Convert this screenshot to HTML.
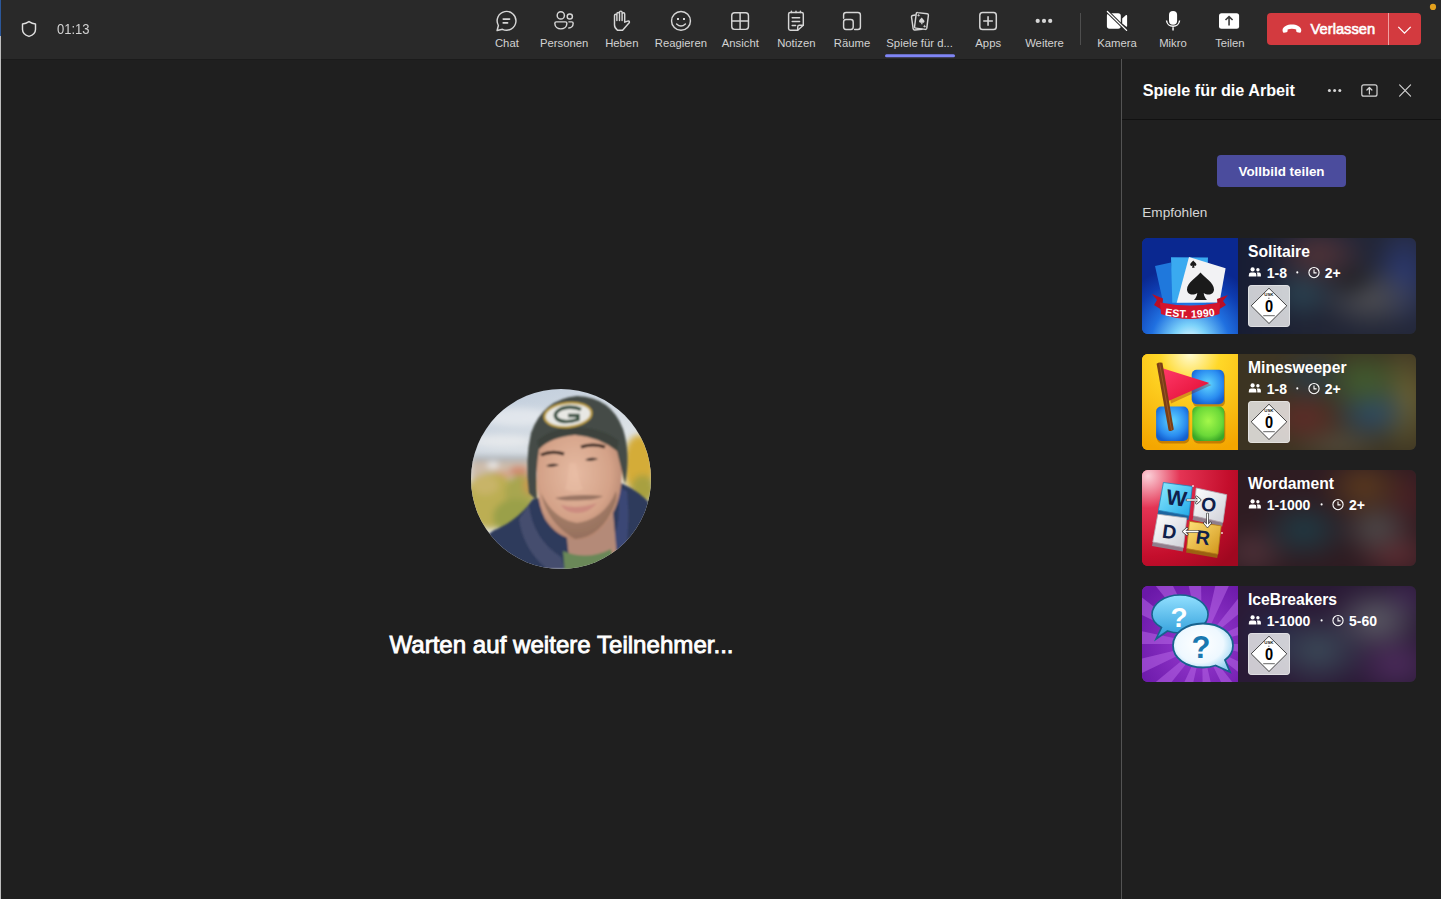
<!DOCTYPE html>
<html><head><meta charset="utf-8">
<style>
*{margin:0;padding:0;box-sizing:border-box}
html,body{width:1441px;height:899px;overflow:hidden;background:#1f1f1f;font-family:"Liberation Sans",sans-serif}
.abs{position:absolute}
.t{position:absolute;white-space:nowrap;line-height:1}
#top{position:absolute;left:0;top:0;width:1441px;height:59px;background:#292929}
.lbl{position:absolute;top:37.6px;font-size:11.3px;line-height:1;color:#d2d2d2;white-space:nowrap;transform:translateX(-50%)}
#panel{position:absolute;left:1121px;top:59px;width:320px;height:840px;background:#1f1f1f;border-left:1px solid #535353}
.card{position:absolute;left:1142px;width:274px;height:96px;border-radius:6px;overflow:hidden;background:#2a2a2a}
.card .ic{position:absolute;left:0;top:0;width:96px;height:96px}
.card .bg{position:absolute;left:96px;top:0;width:178px;height:96px}
.card .ti{position:absolute;left:106px;font-size:15.7px;font-weight:700;color:#fff;line-height:1;white-space:nowrap}
.card .mt{position:absolute;font-size:14px;font-weight:700;color:#fff;line-height:1;white-space:nowrap}
.card .bg{overflow:hidden}.bgi{position:absolute;left:-20px;top:-20px;width:218px;height:136px;filter:blur(9px)}
.usk{position:absolute;left:106px;top:47px;width:42px;height:42px;border-radius:4px;background:rgba(255,255,255,0.77);box-shadow:inset 0 0 0 0.8px rgba(255,255,255,0.5)}

#bg1{background:radial-gradient(50px 32px at 101px 37px,#553438,transparent),radial-gradient(28px 22px at 133px 60px,#1e1e22,transparent),radial-gradient(55px 34px at 152px 80px,#505054,transparent),radial-gradient(35px 30px at 84px 75px,#2c4654,transparent),radial-gradient(34px 55px at 186px 56px,#2c3a74,transparent),linear-gradient(90deg,#151b34,#202434 40%,#24283a)}
#bg2{background:radial-gradient(45px 34px at 146px 46px,#426030,transparent),radial-gradient(42px 34px at 154px 77px,#2a4c6c,transparent),radial-gradient(45px 30px at 86px 84px,#622a28,transparent),radial-gradient(36px 60px at 188px 65px,#6e6434,transparent),radial-gradient(40px 28px at 94px 44px,#2a3c4a,transparent),radial-gradient(50px 22px at 120px 110px,#524a3c,transparent),#3c3422}
#bg3{background:radial-gradient(46px 34px at 146px 37px,#5e3c1e,transparent),radial-gradient(48px 34px at 86px 80px,#1e3c46,transparent),radial-gradient(40px 32px at 158px 78px,#504c4c,transparent),radial-gradient(44px 28px at 178px 104px,#602c32,transparent),radial-gradient(40px 30px at 35px 102px,#50323a,transparent),radial-gradient(30px 40px at 190px 48px,#4a2024,transparent),#2e1c22}
#bg4{background:radial-gradient(55px 40px at 100px 84px,#3c4c5a,transparent),radial-gradient(50px 36px at 158px 54px,#5e5e68,transparent),radial-gradient(48px 34px at 178px 98px,#4e2c5e,transparent),radial-gradient(36px 40px at 54px 70px,#262a4a,transparent),radial-gradient(30px 25px at 190px 30px,#3c2450,transparent),#2a1a36}
#ic1{background:radial-gradient(60px 40px at 48px 100px,#c8f4ff,#3aa0f0 45%,transparent 100%),radial-gradient(70px 70px at 48px 50px,#1a5ad8,#0c2c96)}
#ic2{background:radial-gradient(60px 40px at 48px 5px,#fff6a0,#ffd21e 60%,transparent),#f7b400}
#ic3{background:radial-gradient(50px 50px at 10px 10px,#f5a0b0,transparent),linear-gradient(135deg,#e02a48,#c8102e 60%,#a80020)}
#ic4{background:radial-gradient(70px 70px at 48px 48px,#9a3ad0,#7a1ab8)}
</style></head>
<body>
<div id="top"></div>
<div class="abs" style="left:0;top:59px;width:1441px;height:1px;background:#1b1b1b"></div>
<div class="abs" style="left:0;top:0;width:1px;height:36px;background:#2b579a"></div>
<div class="abs" style="left:0;top:36px;width:1px;height:863px;background:#bdbdbd"></div>


<!-- leave button -->
<div class="abs" style="left:1267px;top:13px;width:154px;height:32px;border-radius:4px;background:#d33a3f"></div>
<div class="abs" style="left:1388px;top:13px;width:1px;height:32px;background:#f0a0a2"></div>
<span class="t" style="left:1310.6px;top:21.8px;font-size:14.7px;color:#fff;-webkit-text-stroke:0.6px #fff">Verlassen</span>

<!-- toolbar icons -->
<svg class="abs" style="left:0;top:0" width="1441" height="59" viewBox="0 0 1441 59">
<g fill="none" stroke="#d6d6d6" stroke-width="1.45" stroke-linecap="round" stroke-linejoin="round">
<!-- shield -->
<path d="M29,21.6 C26.8,23.2 24.6,23.9 22.5,23.9 V29.4 C22.5,32.6 25,35 29,36.4 C33,35 35.5,32.6 35.5,29.4 V23.9 C33.4,23.9 31.2,23.2 29,21.6 Z" stroke="#e0e0e0"/>
<!-- chat -->
<path d="M498.4,25.5 A9.4,9.4 0 1 1 502.5,29.3 L497.1,30.5 Z"/>
<path d="M503.2,19.1 H509.6 M503.2,22.9 H507.6" stroke-width="1.6"/>
<!-- personen -->
<circle cx="560.8" cy="15.4" r="3.6"/>
<circle cx="569.8" cy="16.5" r="2.6"/>
<path d="M554.85,23.3 Q554.85,21.85 556.3,21.85 H565.4 Q566.85,21.85 566.85,23.3 V23.6 C566.85,27 564,28.85 560.85,28.85 C557.7,28.85 554.85,27 554.85,23.6 Z"/>
<path d="M568.9,21.85 H571.8 Q573.15,21.85 573.15,23.2 C573.15,26.3 570.9,27.9 568.8,28"/>
<!-- heben -->
<path transform="translate(612,10)" d="M2.5,15 V5.5 A1.2,1.2 0 0 1 4.9,5.5 V10.5 V3.7 A1.3,1.3 0 0 1 7.5,3.7 V10.5 V2.4 A1.3,1.3 0 0 1 10.1,2.4 V10.5 V4 A1.3,1.3 0 0 1 12.7,4 V12.2 L15.5,11.1 Q17.6,10.6 17.4,12.5 L10.6,20.3 H5.6 Q2.5,18 2.5,15 Z"/>
<!-- smiley -->
<circle cx="681" cy="20.9" r="9.45"/>
<path d="M676.6,23.9 Q681,28.2 685.4,23.9"/>
<rect x="677" y="18" width="2" height="2" fill="#d6d6d6" stroke="none"/>
<rect x="683" y="18" width="2" height="2" fill="#d6d6d6" stroke="none"/>
<!-- ansicht -->
<rect x="731.75" y="12.65" width="16.7" height="16.7" rx="2.8"/>
<path d="M740.1,12.65 V29.35 M731.75,21 H748.45"/>
<!-- notizen -->
<path d="M790.3,12.4 H801.6 Q803.3,12.4 803.3,14.1 V25.3 L797.7,30.3 H790.3 Q788.6,30.3 788.6,28.6 V14.1 Q788.6,12.4 790.3,12.4 Z"/>
<path d="M803.3,25.3 H799.4 Q797.7,25.3 797.7,27 V30.3"/>
<path d="M791.4,11.2 V12.4 M796,11.2 V12.4 M800.4,11.2 V12.4"/>
<path d="M792.2,17.8 H799.6 M792.2,21.6 H799.6 M792.2,25.4 H795.6" stroke-width="1.5"/>
<!-- raeume -->
<path d="M843.6,18.2 V15 Q843.6,12.5 846.1,12.5 H857.9 Q860.4,12.5 860.4,15 V26.9 Q860.4,29.4 857.9,29.4 H854.6"/>
<rect x="843.6" y="19.5" width="9.6" height="9.9" rx="2.4"/>
<!-- spiele -->
<path d="M915.2,15 L912.6,15.5 Q911.4,15.8 911.5,17 L913.2,28.8 Q913.5,30.1 914.8,30 L922,29.3"/>
<path d="M917.6,12.6 L927.2,13.8 Q928.6,14 928.4,15.4 L926.8,28.2 Q926.6,29.5 925.3,29.4 L915.8,28.1 Q914.4,27.9 914.6,26.5 L916.2,13.8 Q916.4,12.4 917.6,12.6 Z"/>
<path d="M921.8,17.4 C920.4,19 919,19.9 919,21.3 C919,22.5 920.3,23.1 921.4,22.4 L921.1,24.2 H922.6 L922.3,22.5 C923.4,23.2 924.6,22.6 924.5,21.3 C924.4,20 923.1,19.2 921.8,17.4 Z" fill="#d6d6d6" stroke="none"/>
<path d="M918.7,14.6 L919.5,15.4 L918.7,16.2 L917.9,15.4 Z M924.7,25.6 L925.5,26.4 L924.7,27.2 L923.9,26.4 Z" fill="#d6d6d6" stroke-width="0.8"/>
<!-- apps -->
<rect x="979.8" y="12.6" width="16.5" height="16.9" rx="2.8" stroke-width="1.5"/>
<path d="M988.05,16.8 V25.3 M983.8,21.05 H992.3" stroke-width="1.6"/>
</g>
<!-- weitere -->
<g fill="#d6d6d6"><circle cx="1037.7" cy="20.9" r="2.1"/><circle cx="1044" cy="20.9" r="2.1"/><circle cx="1050.2" cy="20.9" r="2.1"/></g>
<rect x="1080" y="13" width="1" height="32" fill="#4e4e4e"/>
<!-- kamera -->
<g fill="#fff">
<path d="M1109.6,13.2 H1118.2 Q1120.8,13.2 1120.8,15.8 V26.1 Q1120.8,28.7 1118.2,28.7 H1109.5 Q1106.9,28.7 1106.9,26.1 V15.8 Q1106.9,13.2 1109.6,13.2 Z"/>
<path d="M1122.2,18.4 L1126,15.1 Q1127.1,14.6 1127.1,15.8 V26 Q1127.1,27.2 1126,26.6 L1122.2,23.6 Z"/>
</g>
<path d="M1107.4,11.5 L1126.6,30.4" stroke="#292929" stroke-width="3.2"/>
<path d="M1107.4,11.5 L1126.6,30.4" stroke="#fff" stroke-width="1.3" stroke-linecap="round"/>
<!-- mikro -->
<rect x="1169" y="10.9" width="8.1" height="13.9" rx="4.05" fill="#fff"/>
<path d="M1166.5,20.5 A6.6,6.6 0 0 0 1179.6,20.5 M1173.05,27.2 V30.6" fill="none" stroke="#fff" stroke-width="1.4"/>
<!-- teilen -->
<rect x="1219" y="13.2" width="20.1" height="15.5" rx="2.5" fill="#fff"/>
<path d="M1229.05,25.6 V16.8 M1225.5,20 L1229.05,16.6 L1232.6,20" fill="none" stroke="#3a3a3a" stroke-width="1.6"/>
<!-- leave phone -->
<path d="M1282.5,30.2 C1282.8,26.5 1287.5,24.6 1291.9,24.6 C1296.3,24.6 1301,26.5 1301.3,30.2 L1301,31.8 Q1300.8,32.8 1299.8,32.7 L1297.2,32.2 Q1296.2,32 1296.2,31 V29.6 Q1294.2,28.7 1291.9,28.7 Q1289.6,28.7 1287.6,29.6 V31 Q1287.6,32 1286.6,32.2 L1284,32.7 Q1283,32.8 1282.8,31.8 Z" fill="#fff"/>
<path d="M1398.3,26.9 L1404.5,33.1 L1410.7,26.9" fill="none" stroke="#fff" stroke-width="1.3"/>
<circle cx="1433" cy="6.9" r="3.1" fill="#e3a11d"/>
<!-- active underline -->
<rect x="885" y="54.3" width="70" height="3" rx="1.5" fill="#7f85f5"/>
</svg>

<!-- timer -->
<span class="t" style="left:57.2px;top:22px;font-size:14px;color:#d2d2d2;transform:scaleX(0.93);transform-origin:0 0">01:13</span>

<!-- toolbar labels -->
<span class="lbl" style="left:506.9px">Chat</span>
<span class="lbl" style="left:564.2px">Personen</span>
<span class="lbl" style="left:621.8px">Heben</span>
<span class="lbl" style="left:680.9px">Reagieren</span>
<span class="lbl" style="left:740.3px">Ansicht</span>
<span class="lbl" style="left:796.3px">Notizen</span>
<span class="lbl" style="left:852px">Räume</span>
<span class="lbl" style="left:919.6px">Spiele für d...</span>
<span class="lbl" style="left:988.2px">Apps</span>
<span class="lbl" style="left:1044.5px">Weitere</span>
<span class="lbl" style="left:1117px">Kamera</span>
<span class="lbl" style="left:1173px">Mikro</span>
<span class="lbl" style="left:1229.9px">Teilen</span>

<!-- panel -->
<div id="panel"></div>
<div class="abs" style="left:1122px;top:119px;width:319px;height:1px;background:#111"></div>
<span class="t" style="left:1142.7px;top:82px;font-size:16.2px;font-weight:700;color:#fff">Spiele für die Arbeit</span>
<div class="abs" style="left:1217px;top:155px;width:129px;height:32px;border-radius:4px;background:#4b4c9d"></div>
<span class="t" style="left:1281.5px;top:165.3px;font-size:13.4px;font-weight:700;color:#fff;transform:translateX(-50%)">Vollbild teilen</span>
<span class="t" style="left:1142.3px;top:206px;font-size:13.6px;color:#d6d6d6">Empfohlen</span>


<svg class="abs" style="left:1300px;top:70px" width="141" height="40" viewBox="1300 70 141 40">
<g fill="#d6d6d6"><circle cx="1329.4" cy="90.4" r="1.5"/><circle cx="1334.6" cy="90.4" r="1.5"/><circle cx="1339.8" cy="90.4" r="1.5"/></g>
<g fill="none" stroke="#d6d6d6" stroke-width="1.2" stroke-linecap="round" stroke-linejoin="round">
<rect x="1361.8" y="84.8" width="15.2" height="11.4" rx="2"/>
<path d="M1369.4,94 V87.6 M1366.9,90 L1369.4,87.5 L1371.9,90"/>
<path d="M1399.6,84.8 L1410.6,96.2 M1410.6,84.8 L1399.6,96.2" stroke-width="1.1"/>
</g>
</svg>

<!-- cards -->
<div class="card" style="top:238px">
  <div class="bg"><div class="bgi" id="bg1"></div></div>
  <div class="ic" id="ic1"><svg width="96" height="96" viewBox="0 0 96 96">
<defs>
<radialGradient id="s1g" cx="48" cy="104" r="78" gradientUnits="userSpaceOnUse"><stop offset="0" stop-color="#f0fcff"/><stop offset="0.22" stop-color="#7cd2fa"/><stop offset="0.5" stop-color="#2070e0"/><stop offset="0.8" stop-color="#0e3cb0"/><stop offset="1" stop-color="#0a2890"/></radialGradient>
<path id="s1p" d="M16,76.3 Q48,83 80,76.3"/>
</defs>
<rect width="96" height="96" fill="url(#s1g)"/>
<path d="M13,28 L29,24.5 L35,64 L21.5,66 Z" fill="#1f78dc"/>
<path d="M29,19.2 L66,19.6 L64,64.5 L30.3,64.7 Z" fill="#3aaaf0"/>
<path d="M47,19.1 L83.6,30.3 L77.5,64.5 L34.7,64.7 Z" fill="#f2f2f4"/>
<path d="M58.5,34.5 C54,40 45,44.5 45,51.5 C45,56 50.5,58.2 55.3,55 C55,58 53.5,60.5 52,62 H65 C63.5,60.5 62,58 61.7,55 C66.5,58.2 72,56 72,51.5 C72,44.5 63,40 58.5,34.5 Z" fill="#1a1a1a"/>
<path d="M51.2,22.5 C50.2,24 48.2,25 48.2,26.6 C48.2,27.8 49.5,28.3 50.6,27.6 L50,29.7 H52.6 L52,27.6 C53.1,28.3 54.4,27.8 54.4,26.6 C54.4,25 52.2,24 51.2,22.5 Z" fill="#1a1a1a"/>
<path d="M10,56 L21,60.5 L20,72 L12,67 L15,62 Z" fill="#b80e26"/>
<path d="M86,57 L75,61 L76,72 L84,67 L81,63 Z" fill="#b80e26"/>
<path d="M18,64.5 Q48,70.5 78,64.5 L77.5,76 Q48,86 19,76 Z" fill="#d4142c"/>
<text font-family="Liberation Sans" font-size="10.6" font-weight="700" fill="#fff" letter-spacing="0.2"><textPath href="#s1p" startOffset="50%" text-anchor="middle">EST. 1990</textPath></text>
</svg></div>
  <span class="ti" style="top:6.2px">Solitaire</span>
  <svg class="abs" style="left:0;top:0" width="274" height="96" viewBox="0 0 274 96">
<g fill="#fff"><circle cx="110.6" cy="31.4" r="2.1"/><circle cx="115.9" cy="31.8" r="1.7"/>
<path d="M106.8,38.6 V37 Q106.8,34.6 109,34.6 H112.2 Q114.4,34.6 114.4,37 V38.6 Z"/>
<path d="M115.3,38.6 V36.6 Q115.3,35.4 114.7,34.6 H117.1 Q118.9,34.6 118.9,36.6 V38.6 Z"/>
<circle cx="155.3" cy="34.4" r="1.05"/></g>
<circle cx="172" cy="34.6" r="5.1" fill="none" stroke="#fff" stroke-width="1.1"/>
<path d="M172,31.6 V34.9 H174.6" fill="none" stroke="#fff" stroke-width="1.1"/>
</svg>
  <span class="mt" style="left:124.7px;top:27.6px">1-8</span>
  <span class="mt" style="left:182.8px;top:27.6px">2+</span>
  <div class="usk"><svg width="42" height="42" viewBox="0 0 42 42"><path d="M21,3.2 L38.8,20.8 L21,38.5 L3.2,20.8 Z" fill="#fff" stroke="#1a1a1a" stroke-width="0.8"/><text x="20.9" y="11.2" font-family="Liberation Sans" font-size="4.4" font-weight="700" text-anchor="middle" fill="#222">USK</text><rect x="20" y="12.8" width="1.6" height="0.8" fill="#555"/><text x="21.1" y="27.2" font-family="Liberation Sans" font-size="17" font-weight="700" text-anchor="middle" fill="#000" transform="translate(21.1 0) scale(0.86 1) translate(-21.1 0)">0</text><rect x="15.2" y="30.2" width="11.6" height="1" fill="#666"/></svg></div>
</div>
<div class="card" style="top:354px">
  <div class="bg"><div class="bgi" id="bg2"></div></div>
  <div class="ic" id="ic2"><svg width="96" height="96" viewBox="0 0 96 96">
<defs>
<radialGradient id="m1g" cx="48" cy="0" r="100" gradientUnits="userSpaceOnUse"><stop offset="0" stop-color="#fffbd0"/><stop offset="0.3" stop-color="#ffd828"/><stop offset="1" stop-color="#f4a600"/></radialGradient>
<radialGradient id="m2g" cx="0.5" cy="0.42" r="0.62"><stop offset="0" stop-color="#62d8ff"/><stop offset="0.7" stop-color="#2a8cf0"/><stop offset="1" stop-color="#1460d0"/></radialGradient>
<radialGradient id="m3g" cx="0.5" cy="0.42" r="0.62"><stop offset="0" stop-color="#a4f84a"/><stop offset="0.7" stop-color="#6ad838"/><stop offset="1" stop-color="#3aa828"/></radialGradient>
<linearGradient id="m4g" x1="0" y1="0" x2="1" y2="1"><stop offset="0" stop-color="#ff3a6a"/><stop offset="1" stop-color="#e00a30"/></linearGradient>
</defs>
<rect width="96" height="96" fill="url(#m1g)"/>
<rect x="50.7" y="17.8" width="32.3" height="35" rx="5" fill="#9a5800" opacity="0.55"/>
<rect x="49.7" y="15.8" width="32.3" height="34.5" rx="5" fill="url(#m2g)"/>
<rect x="15.1" y="54.5" width="32.3" height="35" rx="5" fill="#9a5800" opacity="0.55"/>
<rect x="14.1" y="52.5" width="32.3" height="34.5" rx="5" fill="url(#m2g)"/>
<rect x="51.3" y="54.5" width="32" height="35" rx="5" fill="#9a5800" opacity="0.55"/>
<rect x="50.3" y="52.5" width="32" height="34.5" rx="5" fill="url(#m3g)"/>
<path d="M20.5,14 L68,29.5 L27.5,48 Z" fill="#8a2010" opacity="0.35" transform="translate(1.5 1.5)"/>
<path d="M19.7,14.1 L67.5,29.1 L26.4,47 Z" fill="url(#m4g)"/>
<path d="M14.6,9.8 Q17,7.6 20.4,8.8 L31.8,75.6 Q29.2,78 26.6,76.4 Z" fill="#7a3e16"/>
<path d="M17.6,9.5 L29.5,76" stroke="#a86030" stroke-width="1" opacity="0.7"/>
</svg></div>
  <span class="ti" style="top:6.2px">Minesweeper</span>
  <svg class="abs" style="left:0;top:0" width="274" height="96" viewBox="0 0 274 96">
<g fill="#fff"><circle cx="110.6" cy="31.4" r="2.1"/><circle cx="115.9" cy="31.8" r="1.7"/>
<path d="M106.8,38.6 V37 Q106.8,34.6 109,34.6 H112.2 Q114.4,34.6 114.4,37 V38.6 Z"/>
<path d="M115.3,38.6 V36.6 Q115.3,35.4 114.7,34.6 H117.1 Q118.9,34.6 118.9,36.6 V38.6 Z"/>
<circle cx="155.3" cy="34.4" r="1.05"/></g>
<circle cx="172" cy="34.6" r="5.1" fill="none" stroke="#fff" stroke-width="1.1"/>
<path d="M172,31.6 V34.9 H174.6" fill="none" stroke="#fff" stroke-width="1.1"/>
</svg>
  <span class="mt" style="left:124.7px;top:27.6px">1-8</span>
  <span class="mt" style="left:182.8px;top:27.6px">2+</span>
  <div class="usk"><svg width="42" height="42" viewBox="0 0 42 42"><path d="M21,3.2 L38.8,20.8 L21,38.5 L3.2,20.8 Z" fill="#fff" stroke="#1a1a1a" stroke-width="0.8"/><text x="20.9" y="11.2" font-family="Liberation Sans" font-size="4.4" font-weight="700" text-anchor="middle" fill="#222">USK</text><rect x="20" y="12.8" width="1.6" height="0.8" fill="#555"/><text x="21.1" y="27.2" font-family="Liberation Sans" font-size="17" font-weight="700" text-anchor="middle" fill="#000" transform="translate(21.1 0) scale(0.86 1) translate(-21.1 0)">0</text><rect x="15.2" y="30.2" width="11.6" height="1" fill="#666"/></svg></div>
</div>
<div class="card" style="top:470px">
  <div class="bg"><div class="bgi" id="bg3"></div></div>
  <div class="ic" id="ic3"><svg width="96" height="96" viewBox="0 0 96 96">
<defs>
<radialGradient id="w1g" cx="6" cy="6" r="115" gradientUnits="userSpaceOnUse"><stop offset="0" stop-color="#fbd0d8"/><stop offset="0.28" stop-color="#e43454"/><stop offset="0.7" stop-color="#c40e2c"/><stop offset="1" stop-color="#a00820"/></radialGradient>
<linearGradient id="w2g" x1="0" y1="0" x2="1" y2="1"><stop offset="0" stop-color="#90ecff"/><stop offset="1" stop-color="#20a8e8"/></linearGradient>
<linearGradient id="w3g" x1="0" y1="0" x2="1" y2="1"><stop offset="0" stop-color="#ffffff"/><stop offset="1" stop-color="#cfd0d8"/></linearGradient>
<linearGradient id="w4g" x1="0" y1="0" x2="1" y2="1"><stop offset="0" stop-color="#ffe27a"/><stop offset="1" stop-color="#d09418"/></linearGradient>
</defs>
<rect width="96" height="96" fill="url(#w1g)"/>
<g opacity="0.9">
<path d="M16.4,40.3 L47,45.8 L46.5,50 L15.5,44.5 Z" fill="#0a6ca8"/>
<path d="M51.4,45.8 L80.9,52.5 L80.2,56.5 L50.6,50 Z" fill="#8a8a96"/>
<path d="M10.8,72 L41.4,77.5 L40.8,81.5 L10,76 Z" fill="#8a8a96"/>
<path d="M44.7,78.6 L75.9,84.2 L75.2,88 L44,82.6 Z" fill="#9a6a10"/>
</g>
<path d="M21.4,12.5 L50.3,16.4 L47,45.8 L16.4,40.3 Z" fill="url(#w2g)" stroke="#1a88c0" stroke-width="0.8"/>
<path d="M54.2,18 L84.8,24.7 L80.9,52.5 L51.4,45.8 Z" fill="url(#w3g)" stroke="#b0b0b8" stroke-width="0.8"/>
<path d="M15.8,44.2 L44.7,48 L41.4,77.5 L10.8,72 Z" fill="url(#w3g)" stroke="#b0b0b8" stroke-width="0.8"/>
<path d="M47.5,51.4 L79.2,55.8 L75.9,84.2 L44.7,78.6 Z" fill="url(#w4g)" stroke="#b08018" stroke-width="0.8"/>
<g font-family="Liberation Sans" font-weight="700" fill="#10204a" text-anchor="middle">
<text x="34.7" y="35.6" font-size="21.5" transform="rotate(8 34.7 28)">W</text>
<text x="66.8" y="41.3" font-size="19.5" transform="rotate(8 66.8 34.5)">O</text>
<text x="27.5" y="68.5" font-size="19.5" transform="rotate(8 27.5 61.5)">D</text>
<text x="61" y="74.4" font-size="19.5" transform="rotate(8 61 67.5)">R</text>
</g>
<g fill="none" stroke-linecap="round" stroke-linejoin="round">
<path d="M45,30 H57.5 M54.5,27 L58,30 L54.5,33 M65.5,44 V56 M62.5,53 L65.5,56.5 L68.5,53 M56,61.5 H42 M45,58.5 L41.5,61.5 L45,64.5" stroke="#333" stroke-width="2.6"/>
<path d="M45,30 H57.5 M54.5,27 L58,30 L54.5,33 M65.5,44 V56 M62.5,53 L65.5,56.5 L68.5,53 M56,61.5 H42 M45,58.5 L41.5,61.5 L45,64.5" stroke="#fff" stroke-width="1.3"/>
</g>
<g fill="#fff" opacity="0.8"><circle cx="51" cy="16" r="1"/><circle cx="80" cy="63" r="1"/></g>
</svg></div>
  <span class="ti" style="top:6.2px">Wordament</span>
  <svg class="abs" style="left:0;top:0" width="274" height="96" viewBox="0 0 274 96">
<g fill="#fff"><circle cx="110.6" cy="31.4" r="2.1"/><circle cx="115.9" cy="31.8" r="1.7"/>
<path d="M106.8,38.6 V37 Q106.8,34.6 109,34.6 H112.2 Q114.4,34.6 114.4,37 V38.6 Z"/>
<path d="M115.3,38.6 V36.6 Q115.3,35.4 114.7,34.6 H117.1 Q118.9,34.6 118.9,36.6 V38.6 Z"/>
<circle cx="179.6" cy="34.4" r="1.05"/></g>
<circle cx="196" cy="34.6" r="5.1" fill="none" stroke="#fff" stroke-width="1.1"/>
<path d="M196,31.6 V34.9 H198.6" fill="none" stroke="#fff" stroke-width="1.1"/>
</svg>
  <span class="mt" style="left:124.7px;top:27.6px">1-1000</span>
  <span class="mt" style="left:207px;top:27.6px">2+</span>
</div>
<div class="card" style="top:586px">
  <div class="bg"><div class="bgi" id="bg4"></div></div>
  <div class="ic" id="ic4"><svg width="96" height="96" viewBox="0 0 96 96">
<defs>
<radialGradient id="i1g" cx="0.6" cy="0.6" r="0.75"><stop offset="0" stop-color="#9a3cd2"/><stop offset="1" stop-color="#6a18a8"/></radialGradient>
<linearGradient id="i2g" x1="0" y1="0" x2="0" y2="1"><stop offset="0" stop-color="#92e0ff"/><stop offset="1" stop-color="#2a9ad8"/></linearGradient>
<radialGradient id="i3g" cx="0.45" cy="0.42" r="0.65"><stop offset="0" stop-color="#ffffff"/><stop offset="0.6" stop-color="#eef8ff"/><stop offset="1" stop-color="#8ecff0"/></radialGradient>
</defs>
<rect width="96" height="96" fill="url(#i1g)"/>
<g fill="#b464e4" opacity="0.55"><path d="M60,58 L180.0,58.0 L177.4,82.9 Z"/><path d="M60,58 L168.1,110.1 L154.9,131.4 Z"/><path d="M60,58 L134.8,151.8 L113.7,165.3 Z"/><path d="M60,58 L86.7,175.0 L61.8,178.0 Z"/><path d="M60,58 L33.3,175.0 L9.6,166.9 Z"/><path d="M60,58 L-14.8,151.8 L-32.7,134.2 Z"/><path d="M60,58 L-48.1,110.1 L-56.6,86.4 Z"/><path d="M60,58 L-60.0,58.0 L-57.4,33.1 Z"/><path d="M60,58 L-48.1,5.9 L-34.9,-15.4 Z"/><path d="M60,58 L-14.8,-35.8 L6.3,-49.3 Z"/><path d="M60,58 L33.3,-59.0 L58.2,-62.0 Z"/><path d="M60,58 L86.7,-59.0 L110.4,-50.9 Z"/><path d="M60,58 L134.8,-35.8 L152.7,-18.2 Z"/><path d="M60,58 L168.1,5.9 L176.6,29.6 Z"/></g>
<path d="M38,9 C54,9 66,18 66,28.5 C66,39 54,47 38,47 C33,47 29,46.3 25.5,45 L14,53 L19.5,41.5 C13,38 10,33.5 10,28.5 C10,18 22,9 38,9 Z" fill="url(#i2g)" stroke="#17628e" stroke-width="1.6"/>
<path d="M61,37.5 C78,37.5 91,47 91,59.5 C91,65.5 88,70.5 83,74 L88,86 L73.5,79.5 C70,80.8 66,81.5 61,81.5 C44,81.5 31,72 31,59.5 C31,47 44,37.5 61,37.5 Z" fill="url(#i3g)" stroke="#17628e" stroke-width="1.8"/>
<text x="37" y="40.5" font-family="Liberation Sans" font-size="28" font-weight="700" text-anchor="middle" fill="#fff">?</text>
<text x="59" y="71.5" font-family="Liberation Sans" font-size="31" font-weight="700" text-anchor="middle" fill="#1a78b0">?</text>
</svg></div>
  <span class="ti" style="top:6.2px">IceBreakers</span>
  <svg class="abs" style="left:0;top:0" width="274" height="96" viewBox="0 0 274 96">
<g fill="#fff"><circle cx="110.6" cy="31.4" r="2.1"/><circle cx="115.9" cy="31.8" r="1.7"/>
<path d="M106.8,38.6 V37 Q106.8,34.6 109,34.6 H112.2 Q114.4,34.6 114.4,37 V38.6 Z"/>
<path d="M115.3,38.6 V36.6 Q115.3,35.4 114.7,34.6 H117.1 Q118.9,34.6 118.9,36.6 V38.6 Z"/>
<circle cx="179.6" cy="34.4" r="1.05"/></g>
<circle cx="196" cy="34.6" r="5.1" fill="none" stroke="#fff" stroke-width="1.1"/>
<path d="M196,31.6 V34.9 H198.6" fill="none" stroke="#fff" stroke-width="1.1"/>
</svg>
  <span class="mt" style="left:124.7px;top:27.6px">1-1000</span>
  <span class="mt" style="left:207px;top:27.6px">5-60</span>
  <div class="usk"><svg width="42" height="42" viewBox="0 0 42 42"><path d="M21,3.2 L38.8,20.8 L21,38.5 L3.2,20.8 Z" fill="#fff" stroke="#1a1a1a" stroke-width="0.8"/><text x="20.9" y="11.2" font-family="Liberation Sans" font-size="4.4" font-weight="700" text-anchor="middle" fill="#222">USK</text><rect x="20" y="12.8" width="1.6" height="0.8" fill="#555"/><text x="21.1" y="27.2" font-family="Liberation Sans" font-size="17" font-weight="700" text-anchor="middle" fill="#000" transform="translate(21.1 0) scale(0.86 1) translate(-21.1 0)">0</text><rect x="15.2" y="30.2" width="11.6" height="1" fill="#666"/></svg></div>
</div>

<!-- stage -->
<!-- avatar -->
<svg class="abs" style="left:471px;top:389px" width="180" height="180" viewBox="0 0 180 180">
<defs>
<clipPath id="avc"><circle cx="90" cy="90" r="90"/></clipPath>
<filter id="avb" x="-10%" y="-10%" width="120%" height="120%"><feGaussianBlur stdDeviation="1.3"/></filter>
<filter id="avb2" x="-20%" y="-20%" width="140%" height="140%"><feGaussianBlur stdDeviation="3"/></filter>
<linearGradient id="sky" x1="0" y1="0" x2="0.3" y2="1"><stop offset="0" stop-color="#bccadb"/><stop offset="0.45" stop-color="#dde2e6"/><stop offset="0.75" stop-color="#e4e6e6"/><stop offset="1" stop-color="#e0e0dc"/></linearGradient>
<radialGradient id="skin" cx="0.45" cy="0.38" r="0.7"><stop offset="0" stop-color="#e6baa2"/><stop offset="0.6" stop-color="#d4a288"/><stop offset="1" stop-color="#a87a66"/></radialGradient>
</defs>
<g clip-path="url(#avc)">
<rect width="180" height="180" fill="url(#sky)"/>
<g filter="url(#avb2)">
<ellipse cx="45" cy="28" rx="38" ry="9" fill="#f0f2f4" opacity="0.6"/>
<ellipse cx="30" cy="52" rx="30" ry="6" fill="#f2f2f2" opacity="0.6"/>
<rect x="0" y="67" width="62" height="5" fill="#a8b0b8"/>
<rect x="0" y="72" width="62" height="18" fill="#cdbcaa"/>
<ellipse cx="22" cy="76" rx="6" ry="3" fill="#f0f0f0"/>
<ellipse cx="48" cy="82" rx="10" ry="5" fill="#d08a70"/>
<ellipse cx="30" cy="86" rx="10" ry="4" fill="#d8a080"/>
<ellipse cx="20" cy="112" rx="28" ry="28" fill="#bcae52"/>
<ellipse cx="50" cy="104" rx="16" ry="18" fill="#a8a650"/>
<ellipse cx="44" cy="128" rx="22" ry="18" fill="#9aa04a"/>
<ellipse cx="14" cy="96" rx="14" ry="10" fill="#c8b468"/>
<ellipse cx="60" cy="96" rx="8" ry="10" fill="#c89a50"/>
<ellipse cx="168" cy="76" rx="16" ry="30" fill="#d4ac38"/>
<ellipse cx="172" cy="100" rx="12" ry="14" fill="#a8a040"/>
</g>
<g filter="url(#avb)">
<!-- hood base -->
<path d="M0,165 Q18,142 26,140 Q48,130 62,110 L150,94 Q170,103 180,116 V180 H0 Z" fill="#2e3a5c"/>
<path d="M58,116 Q62,150 90,168 L94,180 L76,180 Q52,160 48,130 Z" fill="#454e6e"/>
<path d="M146,98 Q152,130 140,156 L134,180 L152,180 Q160,140 156,102 Z" fill="#3a4674"/>
<!-- neck -->
<path d="M94,130 L142,122 L146,168 L98,170 Z" fill="#b48a78"/>
<!-- tshirt -->
<path d="M92,162 Q116,172 140,160 L144,185 L94,185 Z" fill="#6a8858"/>
<!-- face -->
<path d="M66,58 Q66,50 80,46 Q108,40 140,50 Q151,58 151,80 Q151,108 142,124 Q128,150 106,151 Q86,149 74,130 Q66,114 66,90 Z" fill="url(#skin)"/>
<!-- beard -->
<path d="M70,104 Q76,134 104,150 Q132,148 145,112 Q146,106 145,102 Q134,130 106,134 Q82,130 70,104 Z" fill="#7a5c4c" opacity="0.55"/>
<path d="M84,109 Q106,104 132,107 Q126,111 106,111.5 Q90,112 84,109 Z" fill="#5a4035" opacity="0.5"/>
<path d="M90,116 Q106,121 126,114 Q118,124 106,124 Q95,124 90,116 Z" fill="#cc8c80"/>
<!-- eyes & brows -->
<path d="M70,66 Q81,61 93,65" stroke="#352620" stroke-width="3" fill="none"/>
<path d="M110,58 Q122,54 134,58" stroke="#352620" stroke-width="3" fill="none"/>
<path d="M75,77 Q81,73 88,76 Q81,79 75,77 Z" fill="#2e2420"/>
<path d="M114,71 Q120,67 127,70 Q120,73 114,71 Z" fill="#2e2420"/>
<path d="M98,74 Q97,92 94,100 Q103,105 112,100 Q107,90 105,74 Z" fill="#ecc0a8" opacity="0.45"/>
<!-- beanie -->
<path d="M58,104 Q54,70 60,44 Q72,10 106,7 Q140,8 152,40 Q160,65 154,95 Q150,78 146,62 Q128,48 104,46 Q80,48 68,60 Q64,84 66,112 Z" fill="#454c46"/>
<path d="M68,60 Q80,47 104,45 Q130,46 146,62 Q147,56 148,52 Q130,38 104,38 Q80,39 66,52 Z" fill="#3c433d"/>
<!-- G logo -->
<ellipse cx="97" cy="26" rx="23.5" ry="12" transform="rotate(-6 97 26)" fill="#e8e8e4" stroke="#c0a040" stroke-width="2.2"/>
<path d="M110,20.5 Q101,16.5 91,19.5 Q81,24 86,30 Q93,35 107,30.5 L107,26.5 H97" stroke="#2e4a38" stroke-width="3.4" fill="none"/>
</g>
</g>
</svg>

<span class="t" style="left:389.4px;top:633.2px;font-size:24.1px;color:#fff;-webkit-text-stroke:0.85px #fff">Warten auf weitere Teilnehmer...</span>

</body></html>
